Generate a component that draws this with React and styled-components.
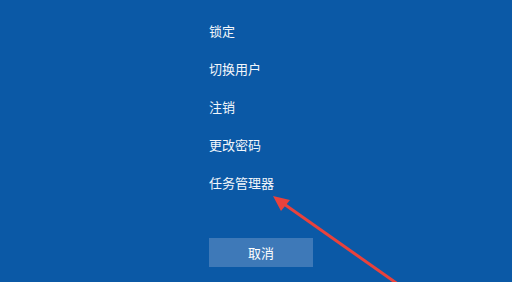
import styled, { createGlobalStyle } from "styled-components";

const GlobalStyle = createGlobalStyle`
    html, body {
        margin: 0;
        padding: 0;
        background-color: #0b59a6;
    }
    body {
        font-family: "Noto Sans CJK SC", "Noto Sans", sans-serif;
    }
`

const Screen = styled.div`
    position: relative;
    width: 512px;
    height: 282px;
    overflow: hidden;
    background-color: #0b59a6;
    display: flex;
    flex-direction: column;
    padding: 12px 0 0 209px;
    box-sizing: border-box;
`

const Menu = styled.ul`
    list-style: none;
    margin: 0;
    padding: 0;
    display: flex;
    flex-direction: column;
`

const MenuItem = styled.li`
    height: 38px;
    line-height: 38px;
    font-size: 13px;
    color: #f2f6fb;
    white-space: nowrap;
`

const CancelButton = styled.button`
    margin-top: 36px;
    width: 104px;
    height: 29px;
    border: none;
    padding: 0;
    background-color: #3e79b8;
    color: #ffffff;
    font-family: inherit;
    font-size: 13px;
    cursor: pointer;
`

const Arrow = styled.svg`
    position: absolute;
    left: 0;
    top: 0;
    pointer-events: none;
`

const items = ["锁定", "切换用户", "注销", "更改密码", "任务管理器"];

const App = () => {
    return (
        <>
            <GlobalStyle />
            <Screen>
                <Menu>
                    {items.map((item) => (
                        <MenuItem key={item}>{item}</MenuItem>
                    ))}
                </Menu>
                <CancelButton>取消</CancelButton>
                <Arrow width="512" height="282" viewBox="0 0 512 282">
                    <line x1="284" y1="204" x2="402" y2="287" stroke="#e9423c" strokeWidth="3" />
                    <polygon points="273,196 290,200 281,211" fill="#e9423c" />
                </Arrow>
            </Screen>
        </>
    );
};

export default App;
